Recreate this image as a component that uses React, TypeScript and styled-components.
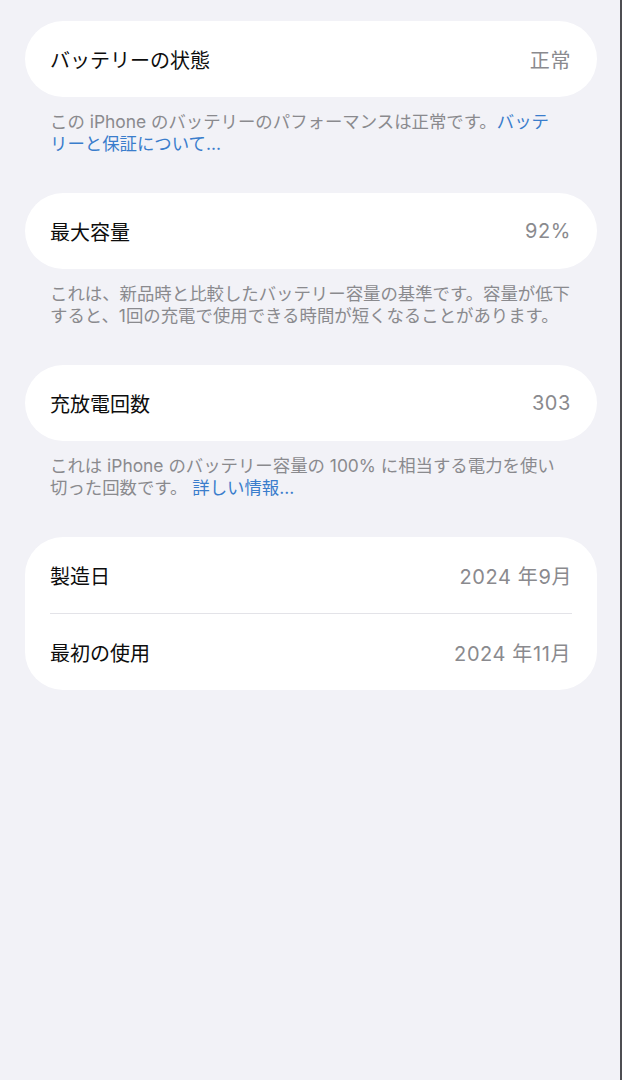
import { FC } from 'react';
import styled, { createGlobalStyle } from 'styled-components';

const GlobalStyle = createGlobalStyle`
  html, body {
    margin: 0;
    padding: 0;
    background: #f2f2f7;
  }
  body {
    font-family: "Inter", "Noto Sans CJK JP", sans-serif;
    -webkit-font-smoothing: antialiased;
  }
`

const Page = styled.div`
  box-sizing: border-box;
  width: 622px;
  min-height: 1080px;
  padding: 21px 23px 0 25px;
  background: #f2f2f7;
  border-right: 2px solid #4d4d52;
`

const Card = styled.div`
  background: #fff;
  border-radius: 38px;
  padding: 0 26px 0 25px;
`

const Row = styled.div<{ $divider?: boolean }>`
  display: flex;
  align-items: center;
  justify-content: space-between;
  height: 76px;
  font-size: 20px;
  border-bottom: ${(p) => (p.$divider ? '1px solid #e3e3e8' : 'none')};
  margin-right: ${(p) => (p.$divider ? '-1px' : '0')};
`

const Label = styled.span`
  color: #0d0d0d;
`

const Value = styled.span`
  color: #8a8a8e;
  letter-spacing: 0.6px;
`

const Footnote = styled.p`
  margin: 14px 0 39px 25px;
  width: 530px;
  font-size: 17.4px;
  line-height: 21.5px;
  color: #8a8a8e;
  white-space: nowrap;
`

const Link = styled.a`
  color: #3a7dcc;
  text-decoration: none;
`

type RowItem = {
  label: string;
  value: string;
}

const InfoCard: FC<{ rows: RowItem[] }> = ({ rows }) => (
  <Card>
    {rows.map((r, i) => (
      <Row key={r.label} $divider={i < rows.length - 1}>
        <Label>{r.label}</Label>
        <Value>{r.value}</Value>
      </Row>
    ))}
  </Card>
)

export default function App() {
  return (
    <>
      <GlobalStyle />
      <Page>
        <InfoCard rows={[{ label: 'バッテリーの状態', value: '正常' }]} />
        <Footnote>
          この iPhone のバッテリーのパフォーマンスは正常です。<Link href="#">バッテ</Link>
          <br />
          <Link href="#">リーと保証について...</Link>
        </Footnote>

        <InfoCard rows={[{ label: '最大容量', value: '92%' }]} />
        <Footnote>
          これは、新品時と比較したバッテリー容量の基準です。容量が低下
          <br />
          すると、1回の充電で使用できる時間が短くなることがあります。
        </Footnote>

        <InfoCard rows={[{ label: '充放電回数', value: '303' }]} />
        <Footnote>
          これは iPhone のバッテリー容量の 100% に相当する電力を使い
          <br />
          切った回数です。 <Link href="#">詳しい情報...</Link>
        </Footnote>

        <InfoCard
          rows={[
            { label: '製造日', value: '2024 年9月' },
            { label: '最初の使用', value: '2024 年11月' },
          ]}
        />
      </Page>
    </>
  );
}
